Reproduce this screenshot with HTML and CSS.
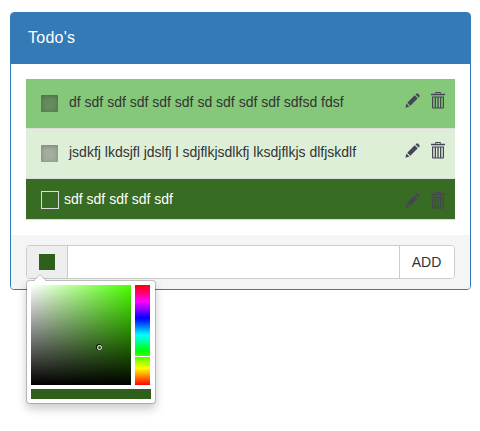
FILE: index.html
```html
<!DOCTYPE html>
<html lang="en">
<head>
<meta charset="utf-8">
<title>Todo's</title>
<link rel="stylesheet" href="styles.css">
</head>
<body>
<svg class="defs" width="0" height="0">
  <symbol id="pencil" viewBox="0 0 16 16">
    <path d="M.4 15.6 1.5 11.200 4.800 14.500zM2.400 10.300 10.300 2.400 13.600 5.700 5.700 13.600zM11.200 1.500 12 .7q1-.9 2 .1l1.200 1.200q1 1 .1 2l-.8.800z"/>
  </symbol>
  <symbol id="trash" viewBox="0 0 14 17">
    <path d="M0 1.700h14v1.500H0zM4 2V1q0-1 1-1h4q1 0 1 1v1H9V1H5v1zM1 4.500h12v11q0 1-1 1H2q-1 0-1-1zM2.200 5.500v9.400q0 .5.5.5h8.600q.5 0 .5-.5V5.500z" fill-rule="evenodd"/>
    <path d="M3.700 5h1.300v11H3.700zM6.350 5h1.300v11h-1.300zM9 5h1.300v11H9z"/>
  </symbol>
</svg>
<main class="panel">
  <header class="heading">Todo's</header>
  <section class="body">
    <div class="todo medium">
      <span class="check"></span><span class="label">df sdf sdf sdf sdf sdf sd sdf sdf sdf sdfsd fdsf</span>
      <span class="actions"><svg class="pencil"><use href="#pencil"/></svg><svg class="trash"><use href="#trash"/></svg></span>
    </div>
    <div class="todo light">
      <span class="check"></span><span class="label">jsdkfj lkdsjfl jdslfj l sdjflkjsdlkfj lksdjflkjs dlfjskdlf</span>
      <span class="actions"><svg class="pencil"><use href="#pencil"/></svg><svg class="trash"><use href="#trash"/></svg></span>
    </div>
    <div class="todo dark">
      <span class="check open"></span><span class="label">sdf sdf sdf sdf sdf</span>
      <span class="actions"><svg class="pencil"><use href="#pencil"/></svg><svg class="trash"><use href="#trash"/></svg></span>
    </div>
  </section>
  <footer class="footer">
    <div class="group">
      <span class="addon"><i class="swatch"></i></span>
      <input class="field" type="text" aria-label="New todo">
      <button class="add">ADD</button>
    </div>
    <div class="picker">
      <div class="saturation"><svg class="guide" width="7" height="7"><circle cx="3" cy="3" r="2.500" stroke="#000"/><circle cx="3.500" cy="3.500" r="2" stroke="#fff"/></svg></div>
      <div class="hue"><i class="marker"></i></div>
      <div class="preview"></div>
    </div>
  </footer>
</main>
</body>
</html>
```
FILE: styles.css
```css
* { box-sizing: border-box; }
body {
  margin: 0;
  min-height: 431px;
  padding: 12px 9px 0 10px;
  background: #fff;
  color: #333;
  font: 14px/20px "Liberation Sans", Arial, sans-serif;
}
.defs { position: absolute; }
.panel {
  height: 278px;
  border: 1px solid #337ab7;
  border-radius: 4px;
}
.heading {
  height: 51px;
  padding: 15px 17px;
  background: #337ab7;
  color: #fff;
  font-size: 16px;
  letter-spacing: .25px;
  border-radius: 2px 2px 0 0;
}
.body { padding: 15px; height: 171px; }
.todo {
  display: flex;
  align-items: flex-start;
  height: 50px;
  padding: 13px 10px 0 15px;
  border-bottom: 1px solid #ddd;
}
.medium { background: #85c87a; }
.light { background: #deefd8; }
.dark { background: #386b24; height: 41px; padding-top: 12px; color: #fff; }
.check {
  width: 17px;
  height: 17px;
  margin: 3px 11px 0 0;
  border-radius: 1px;
  background: rgba(51, 51, 51, .4);
  box-shadow: inset 0 1px 5px rgba(0, 0, 0, .25);
}
.light .check { background: rgba(51, 51, 51, .34); }
.check.open {
  width: 18px;
  height: 18px;
  margin: 0 5px 0 0;
  background: none;
  border: 1px solid #ddd;
  border-radius: 0;
  box-shadow: none;
}
.label { white-space: nowrap; }
.dark .label { margin-top: -2px; }
.actions {
  display: flex;
  gap: 11px;
  margin-left: auto;
  fill: #464553;
}
.dark .actions { margin-top: 1px; }
.pencil { width: 15px; height: 15px; margin-top: 1px; }
.trash { width: 14px; height: 17px; }
.footer {
  height: 54px;
  padding: 10px 15px;
  background: #f5f5f5;
  position: relative;
  border-radius: 0 0 3px 3px;
}
.group {
  display: flex;
  height: 34px;
  border: 1px solid #ccc;
  border-radius: 4px;
  background: #fff;
  overflow: hidden;
}
.addon {
  display: flex;
  width: 40px;
  padding: 8px 12px;
  background: #eee;
}
.swatch { width: 16px; height: 16px; background: #305f1c; }
.field {
  flex: 1;
  min-width: 0;
  border: solid #ccc;
  border-width: 0 1px;
  background: #fff;
}
.add {
  width: 54px;
  padding: 0 1px 0 0;
  border: 0;
  background: #fff;
  color: #333;
  font: inherit;
}
.picker {
  position: absolute;
  top: 45px;
  left: 15px;
  width: 130px;
  height: 124px;
  padding: 4px;
  display: grid;
  grid-template-columns: 100px 15px;
  grid-template-rows: 100px 10px;
  gap: 4px;
  background: #fff;
  background-clip: padding-box;
  border: 1px solid rgba(0, 0, 0, .2);
  border-radius: 4px;
  box-shadow: 0 5px 10px rgba(0, 0, 0, .2);
}
.picker::before, .picker::after {
  content: "";
  position: absolute;
  top: -7px;
  left: 6px;
  border: solid transparent;
  border-width: 0 7px 7px;
  border-bottom-color: rgba(0, 0, 0, .2);
}
.picker::after {
  top: -6px;
  left: 7px;
  border-width: 0 6px 6px;
  border-bottom-color: #fff;
}
.saturation {
  background: linear-gradient(transparent, #000), linear-gradient(to right, #fff, #4cff00);
  position: relative;
}
.guide { position: absolute; left: 65px; top: 59px; fill: none; }
.hue {
  position: relative;
  background: linear-gradient(#f00, #f0f 16.67%, #00f 33.33%, #0ff 50%, #0f0 66.67%, #ff0 83.33%, #f00);
}
.marker { position: absolute; top: 71px; left: 0; width: 15px; height: 1px; background: #fff; }
.preview { grid-column: 1 / 3; width: 120px; background: #305f1c; }
```
